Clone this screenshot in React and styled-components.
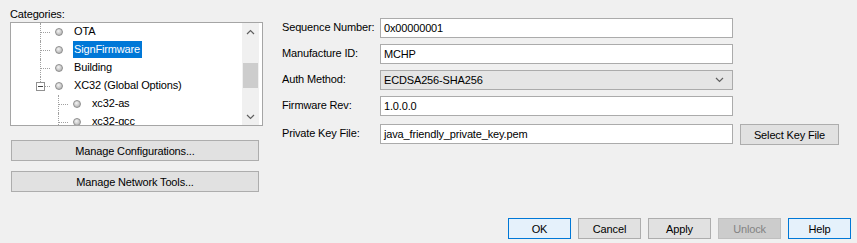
import React from "react";
import styled, { createGlobalStyle } from "styled-components";

const GlobalStyle = createGlobalStyle`
  html, body { margin: 0; padding: 0; background: #f0f0f0; }
  body { font-family: "Liberation Sans", Arial, sans-serif; font-size: 11px; color: #000; letter-spacing: -0.15px; }
  button { letter-spacing: -0.15px; }
`;

const Page = styled.div`
  width: 857px;
  height: 243px;
  box-sizing: border-box;
  padding: 7px 6px 4px 10px;
  display: flex;
  flex-direction: column;
  background: #f0f0f0;
`;

const Top = styled.div`
  display: flex;
  align-items: flex-start;
`;

const LeftCol = styled.div`
  width: 253px;
  display: flex;
  flex-direction: column;
`;

const Caption = styled.div`
  height: 15px;
  line-height: 15px;
`;

const TreeBox = styled.div`
  height: 104px;
  box-sizing: border-box;
  border: 1px solid #a5a5a5;
  background: #fff;
  display: flex;
  overflow: hidden;
`;

const TreeContent = styled.div`
  flex: 1;
  display: flex;
  flex-direction: column;
  padding-left: 21px;
  overflow: hidden;
`;

const TreeRow = styled.div`
  display: flex;
  height: 18px;
  flex-shrink: 0;
`;

const Guide = styled.div`
  width: 18px;
  flex-shrink: 0;
`;

const Connector = styled.div`
  width: 18px;
  flex-shrink: 0;
  position: relative;
  &::before {
    content: "";
    position: absolute;
    left: 8px;
    top: 0;
    bottom: 0;
    border-left: 1px dotted #a0a0a0;
  }
  &::after {
    content: "";
    position: absolute;
    left: 9px;
    top: 9px;
    width: 9px;
    border-top: 1px dotted #a0a0a0;
  }
`;

const ExpanderCell = styled.div`
  width: 18px;
  flex-shrink: 0;
  position: relative;
  &::before {
    content: "";
    position: absolute;
    left: 8px;
    top: 0;
    height: 5px;
    border-left: 1px dotted #a0a0a0;
  }
  &::after {
    content: "";
    position: absolute;
    left: 13px;
    top: 9px;
    width: 5px;
    border-top: 1px dotted #a0a0a0;
  }
`;

const Expander = styled.div`
  position: absolute;
  left: 4px;
  top: 5px;
  width: 9px;
  height: 9px;
  box-sizing: border-box;
  border: 1px solid #919191;
  background: #fff;
  display: flex;
  align-items: center;
  justify-content: center;
  &::before {
    content: "";
    width: 5px;
    height: 1px;
    background: #444;
  }
`;

const BulletCell = styled.div`
  width: 18px;
  flex-shrink: 0;
  display: flex;
  align-items: center;
  justify-content: center;
`;

const Bullet = styled.div`
  width: 8px;
  height: 8px;
  box-sizing: border-box;
  border-radius: 50%;
  border: 1px solid #8e8e8e;
  background: radial-gradient(circle at 40% 35%, #f4f4f4 0%, #c8c8c8 55%, #a4a4a4 100%);
`;

const Label = styled.span`
  margin-left: 5px;
  padding: 0 2px 0 1px;
  height: 17px;
  line-height: 17px;
  white-space: nowrap;
  background: ${(p) => (p.$selected ? "#0078d7" : "transparent")};
  color: ${(p) => (p.$selected ? "#fff" : "#000")};
`;

const ScrollBar = styled.div`
  width: 17px;
  margin-right: 3px;
  flex-shrink: 0;
  display: flex;
  flex-direction: column;
  background: #f0f0f0;
`;

const ScrollArrow = styled.div`
  height: 17px;
  display: flex;
  align-items: center;
  justify-content: center;
`;

const ScrollTrack = styled.div`
  flex: 1;
  display: flex;
  flex-direction: column;
  padding-top: 23px;
`;

const Thumb = styled.div`
  height: 25px;
  margin: 0 1px;
  background: #cdcdcd;
`;

const WideButton = styled.button`
  height: 21px;
  width: 248px;
  margin-left: 1px;
  margin-top: ${(p) => p.$mt}px;
  box-sizing: border-box;
  border: 1px solid #adadad;
  background: #e1e1e1;
  font-family: inherit;
  font-size: 11px;
  color: #000;
  padding: 0;
`;

const RightCol = styled.div`
  margin-left: 19px;
  margin-top: 11px;
  display: grid;
  grid-template-columns: 91px 353px auto;
  row-gap: 6px;
  column-gap: 7px;
  align-items: center;
`;

const FieldLabel = styled.div`
  grid-column: 1;
  white-space: nowrap;
  padding-bottom: 2px;
`;

const Field = styled.div`
  grid-column: 2;
  height: 20px;
  box-sizing: border-box;
  border: 1px solid #ababab;
  background: ${(p) => (p.$combo ? "#e5e5e5" : "#fff")};
  display: flex;
  align-items: center;
  justify-content: space-between;
  padding: 0 8px 0 3px;
`;

const SideButton = styled.button`
  grid-column: 3;
  width: 99px;
  height: 21px;
  margin-top: 2px;
  box-sizing: border-box;
  border: 1px solid #adadad;
  background: #e1e1e1;
  font-family: inherit;
  font-size: 11px;
  padding: 0;
  color: #000;
`;

const Footer = styled.div`
  margin-top: auto;
  display: flex;
  justify-content: flex-end;
  gap: 7px;
`;

const DialogButton = styled.button`
  width: 63px;
  height: 21px;
  box-sizing: border-box;
  font-family: inherit;
  font-size: 11px;
  padding: 0;
  border: 1px solid
    ${(p) => (p.$variant === "primary" ? "#0078d7" : p.$variant === "disabled" ? "#bfbfbf" : "#adadad")};
  background: ${(p) =>
    p.$variant === "primary" ? "#e5f1fb" : p.$variant === "disabled" ? "#cccccc" : "#e1e1e1"};
  color: ${(p) => (p.$variant === "disabled" ? "#838383" : "#000")};
`;

const Chevron = ({ down }) => (
  <svg width="9" height="6" viewBox="0 0 9 6">
    <polyline
      points={down ? "1,1 4.5,4.5 8,1" : "1,5 4.5,1.5 8,5"}
      fill="none"
      stroke="#606060"
      strokeWidth="1.2"
    />
  </svg>
);

const items = [
  { label: "OTA", level: 1 },
  { label: "SignFirmware", level: 1, selected: true },
  { label: "Building", level: 1 },
  { label: "XC32 (Global Options)", level: 1, expander: true },
  { label: "xc32-as", level: 2 },
  { label: "xc32-gcc", level: 2 },
];

const fields = [
  { label: "Sequence Number:", value: "0x00000001" },
  { label: "Manufacture ID:", value: "MCHP" },
  { label: "Auth Method:", value: "ECDSA256-SHA256", combo: true },
  { label: "Firmware Rev:", value: "1.0.0.0" },
  { label: "Private Key File:", value: "java_friendly_private_key.pem", button: "Select Key File" },
];

export default function App() {
  return (
    <>
      <GlobalStyle />
      <Page>
        <Top>
          <LeftCol>
            <Caption>Categories:</Caption>
            <TreeBox>
              <TreeContent>
                {items.map((it) => (
                  <TreeRow key={it.label}>
                    {it.level === 2 && <Guide />}
                    {it.expander ? (
                      <ExpanderCell>
                        <Expander />
                      </ExpanderCell>
                    ) : (
                      <Connector />
                    )}
                    <BulletCell>
                      <Bullet />
                    </BulletCell>
                    <Label $selected={it.selected}>{it.label}</Label>
                  </TreeRow>
                ))}
              </TreeContent>
              <ScrollBar>
                <ScrollArrow>
                  <Chevron />
                </ScrollArrow>
                <ScrollTrack>
                  <Thumb />
                </ScrollTrack>
                <ScrollArrow>
                  <Chevron down />
                </ScrollArrow>
              </ScrollBar>
            </TreeBox>
            <WideButton $mt={14}>Manage Configurations...</WideButton>
            <WideButton $mt={10}>Manage Network Tools...</WideButton>
          </LeftCol>
          <RightCol>
            {fields.map((f) => (
              <React.Fragment key={f.label}>
                <FieldLabel>{f.label}</FieldLabel>
                <Field $combo={f.combo}>
                  <span>{f.value}</span>
                  {f.combo && <Chevron down />}
                </Field>
                {f.button && <SideButton>{f.button}</SideButton>}
              </React.Fragment>
            ))}
          </RightCol>
        </Top>
        <Footer>
          <DialogButton $variant="primary">OK</DialogButton>
          <DialogButton>Cancel</DialogButton>
          <DialogButton>Apply</DialogButton>
          <DialogButton $variant="disabled">Unlock</DialogButton>
          <DialogButton $variant="primary">Help</DialogButton>
        </Footer>
      </Page>
    </>
  );
}
